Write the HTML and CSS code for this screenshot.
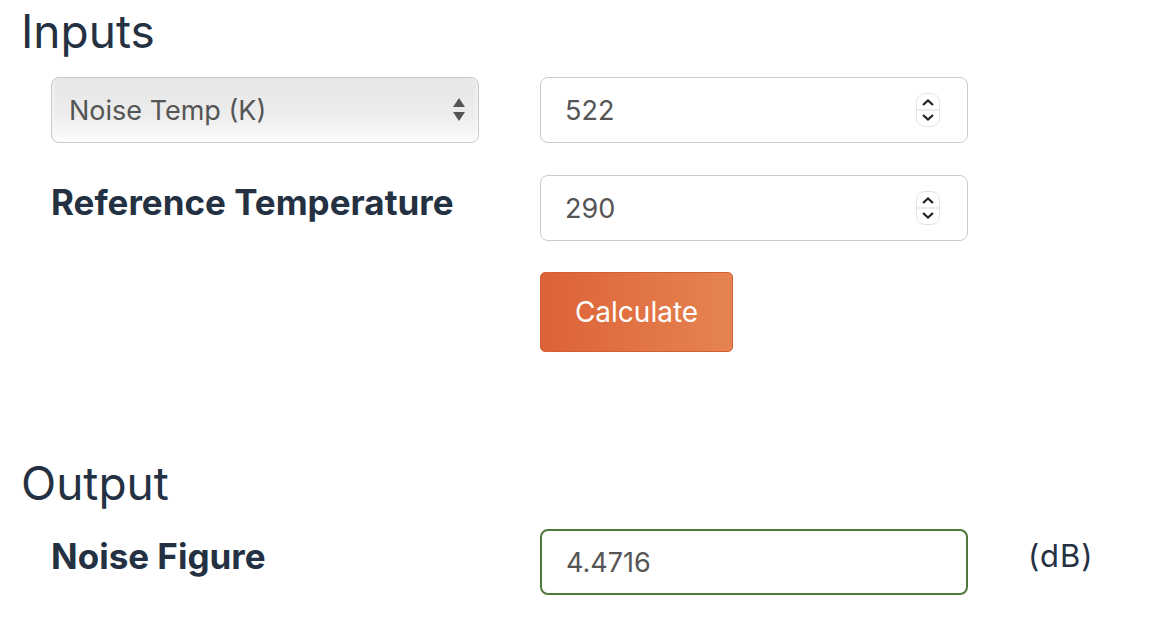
FILE: index.html
```html
<!DOCTYPE html>
<html>
<head>
<meta charset="utf-8">
<link rel="stylesheet" href="styles.css">
</head>
<body>
<h2 class="heading">Inputs</h2>
<div class="form">
  <div class="row">
    <div class="label-cell">
      <div class="select-wrap">
        <select class="select"><option>Noise Temp (K)</option></select>
        <svg class="select-arrows" width="14" height="28" viewBox="0 0 14 28"><polygon points="7,2 13,11 1,11" fill="#555"/><polygon points="1,16 13,16 7,25" fill="#555"/></svg>
      </div>
    </div>
    <div class="field">
      <input class="input" type="text" value="522">
      <div class="spinner"><svg width="24" height="34" viewBox="0 0 24 34"><path d="M7 12 L12 7.5 L17 12" fill="none" stroke="#222" stroke-width="2.2"/><line x1="1" y1="17" x2="23" y2="17" stroke="#ddd" stroke-width="1"/><path d="M7 22 L12 26.5 L17 22" fill="none" stroke="#222" stroke-width="2.2"/></svg></div>
    </div>
  </div>
  <div class="row">
    <div class="label-cell"><label class="label">Reference Temperature</label></div>
    <div class="field">
      <input class="input" type="text" value="290">
      <div class="spinner"><svg width="24" height="34" viewBox="0 0 24 34"><path d="M7 12 L12 7.5 L17 12" fill="none" stroke="#222" stroke-width="2.2"/><line x1="1" y1="17" x2="23" y2="17" stroke="#ddd" stroke-width="1"/><path d="M7 22 L12 26.5 L17 22" fill="none" stroke="#222" stroke-width="2.2"/></svg></div>
    </div>
  </div>
  <div class="row">
    <div class="label-cell"></div>
    <div class="field-plain"><button class="btn">Calculate</button></div>
  </div>
</div>
<h2 class="heading heading-out">Output</h2>
<div class="form">
  <div class="row">
    <div class="label-cell"><label class="label">Noise Figure</label></div>
    <div class="field-plain"><input class="input output" type="text" value="4.4716" readonly></div>
    <div class="unit">(dB)</div>
  </div>
</div>
</body>
</html>
```
FILE: styles.css
```css
html, body {
  margin: 0;
  padding: 0;
  background: #fff;
}
body {
  font-family: Inter, "Noto Sans", "Liberation Sans", sans-serif;
  color: #243142;
  padding-left: 21px;
}
.heading {
  font-size: 46px;
  font-weight: 400;
  margin: 0;
  padding-top: 4px;
  line-height: 54px;
}
.heading-out {
  margin-top: 100px;
}
.form {
  display: flex;
  flex-direction: column;
  gap: 32px;
  padding-left: 30px;
  margin-top: 19px;
}
.row {
  display: flex;
  align-items: flex-start;
}
.label-cell {
  width: 489px;
  flex: none;
}
.label {
  display: block;
  font-size: 35px;
  font-weight: 700;
  line-height: 54px;
}
.select-wrap {
  position: relative;
  width: 428px;
  height: 66px;
}
.select {
  appearance: none;
  -webkit-appearance: none;
  width: 428px;
  height: 66px;
  box-sizing: border-box;
  border: 1.5px solid #c9c9c9;
  border-radius: 8px;
  background: linear-gradient(to bottom, #e6e6e6 0%, #ececec 55%, #fafafa 100%);
  font-family: inherit;
  font-size: 27px;
  color: #555;
  padding: 0 0 0 17px;
  box-shadow: inset 0 -3px 6px rgba(255,255,255,0.8);
}
.select-arrows {
  position: absolute;
  right: 13px;
  top: 19px;
}
.field {
  position: relative;
  width: 428px;
  height: 66px;
}
.field-plain {
  width: 428px;
}
.input {
  width: 428px;
  height: 66px;
  box-sizing: border-box;
  border: 1.5px solid #cccccc;
  border-radius: 8px;
  font-family: inherit;
  font-size: 27px;
  color: #555;
  padding: 0 0 0 24px;
  background: #fff;
  outline: none;
}
.spinner {
  position: absolute;
  right: 28px;
  top: 16px;
  width: 24px;
  height: 34px;
  box-sizing: border-box;
  border: 1px solid #e4e4e4;
  border-radius: 9px;
  background: #fff;
  overflow: hidden;
}
.spinner svg {
  display: block;
  margin: -1px;
}
.btn {
  margin-top: -1px;
  width: 193px;
  height: 80px;
  border: 1px solid #d35f35;
  border-radius: 5px;
  background: linear-gradient(to right, #dc6237 0%, #e68450 100%);
  color: #fff;
  font-family: inherit;
  font-size: 28px;
  font-weight: 400;
  padding: 0;
}
.output {
  border: 2px solid #4e7a3c;
}
.unit {
  margin-left: 60px;
  font-size: 31px;
  letter-spacing: 1px;
  line-height: 54px;
}
```
